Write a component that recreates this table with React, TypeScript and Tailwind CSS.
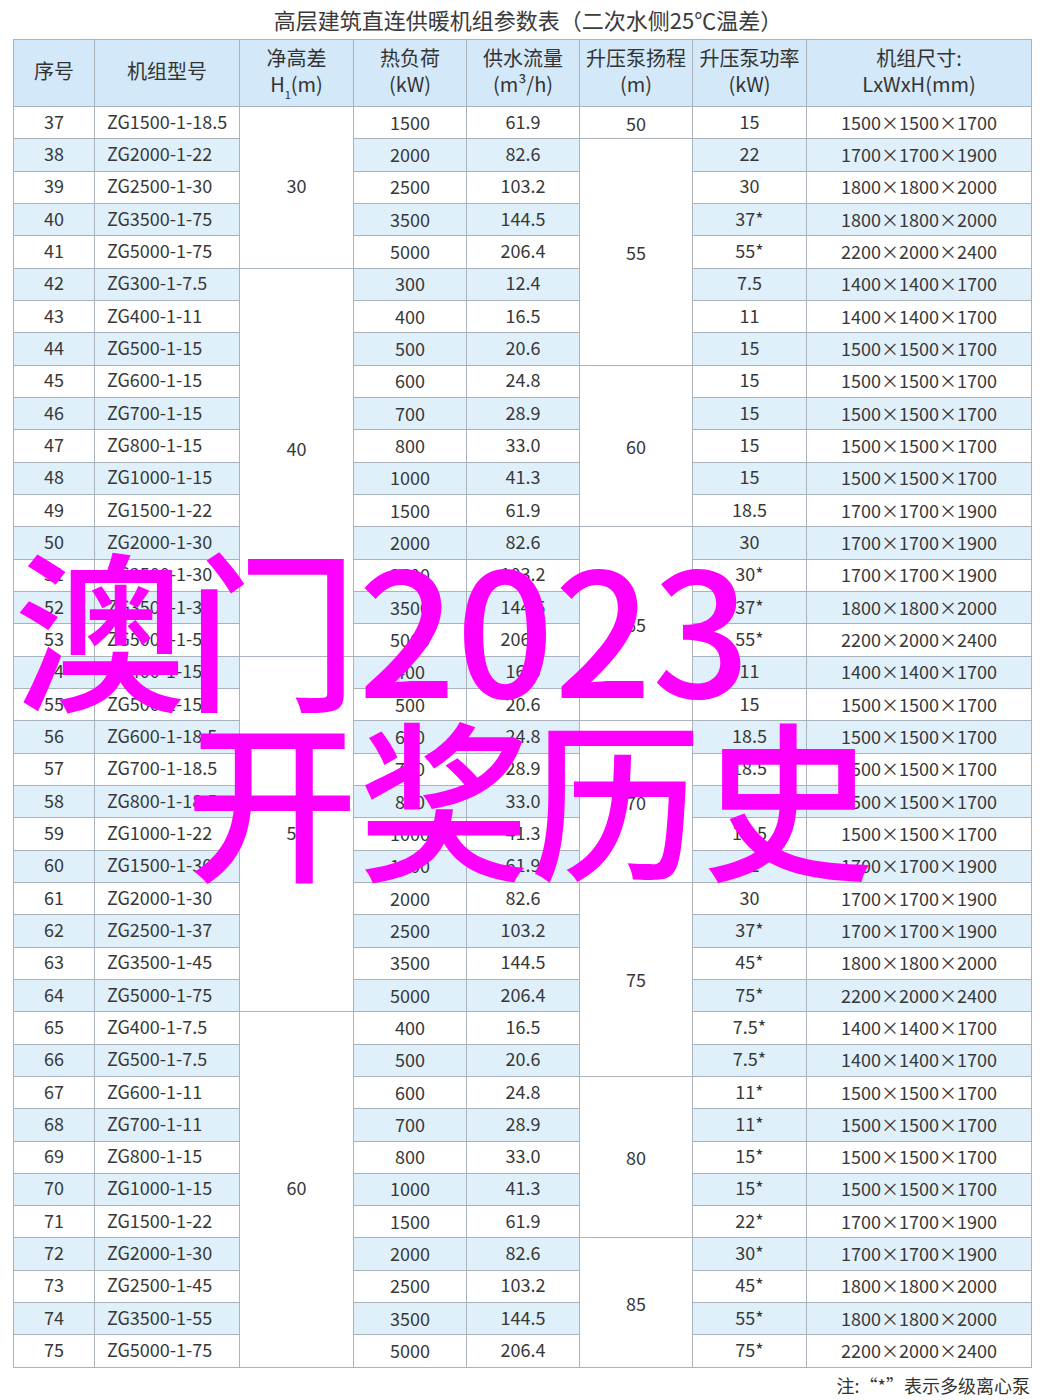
const rows: [number, string, string, string, string, string][] = [
  [37, "ZG1500-1-18.5", "1500", "61.9", "15", "1500×1500×1700"],
  [38, "ZG2000-1-22", "2000", "82.6", "22", "1700×1700×1900"],
  [39, "ZG2500-1-30", "2500", "103.2", "30", "1800×1800×2000"],
  [40, "ZG3500-1-75", "3500", "144.5", "37*", "1800×1800×2000"],
  [41, "ZG5000-1-75", "5000", "206.4", "55*", "2200×2000×2400"],
  [42, "ZG300-1-7.5", "300", "12.4", "7.5", "1400×1400×1700"],
  [43, "ZG400-1-11", "400", "16.5", "11", "1400×1400×1700"],
  [44, "ZG500-1-15", "500", "20.6", "15", "1500×1500×1700"],
  [45, "ZG600-1-15", "600", "24.8", "15", "1500×1500×1700"],
  [46, "ZG700-1-15", "700", "28.9", "15", "1500×1500×1700"],
  [47, "ZG800-1-15", "800", "33.0", "15", "1500×1500×1700"],
  [48, "ZG1000-1-15", "1000", "41.3", "15", "1500×1500×1700"],
  [49, "ZG1500-1-22", "1500", "61.9", "18.5", "1700×1700×1900"],
  [50, "ZG2000-1-30", "2000", "82.6", "30", "1700×1700×1900"],
  [51, "ZG2500-1-30", "2500", "103.2", "30*", "1700×1700×1900"],
  [52, "ZG3500-1-37", "3500", "144.5", "37*", "1800×1800×2000"],
  [53, "ZG5000-1-55", "5000", "206.4", "55*", "2200×2000×2400"],
  [54, "ZG400-1-15", "400", "16.5", "11", "1400×1400×1700"],
  [55, "ZG500-1-15", "500", "20.6", "15", "1500×1500×1700"],
  [56, "ZG600-1-18.5", "600", "24.8", "18.5", "1500×1500×1700"],
  [57, "ZG700-1-18.5", "700", "28.9", "18.5", "1500×1500×1700"],
  [58, "ZG800-1-18.5", "800", "33.0", "18.5", "1500×1500×1700"],
  [59, "ZG1000-1-22", "1000", "41.3", "18.5", "1500×1500×1700"],
  [60, "ZG1500-1-30", "1500", "61.9", "22", "1700×1700×1900"],
  [61, "ZG2000-1-30", "2000", "82.6", "30", "1700×1700×1900"],
  [62, "ZG2500-1-37", "2500", "103.2", "37*", "1700×1700×1900"],
  [63, "ZG3500-1-45", "3500", "144.5", "45*", "1800×1800×2000"],
  [64, "ZG5000-1-75", "5000", "206.4", "75*", "2200×2000×2400"],
  [65, "ZG400-1-7.5", "400", "16.5", "7.5*", "1400×1400×1700"],
  [66, "ZG500-1-7.5", "500", "20.6", "7.5*", "1400×1400×1700"],
  [67, "ZG600-1-11", "600", "24.8", "11*", "1500×1500×1700"],
  [68, "ZG700-1-11", "700", "28.9", "11*", "1500×1500×1700"],
  [69, "ZG800-1-15", "800", "33.0", "15*", "1500×1500×1700"],
  [70, "ZG1000-1-15", "1000", "41.3", "15*", "1500×1500×1700"],
  [71, "ZG1500-1-22", "1500", "61.9", "22*", "1700×1700×1900"],
  [72, "ZG2000-1-30", "2000", "82.6", "30*", "1700×1700×1900"],
  [73, "ZG2500-1-45", "2500", "103.2", "45*", "1800×1800×2000"],
  [74, "ZG3500-1-55", "3500", "144.5", "55*", "1800×1800×2000"],
  [75, "ZG5000-1-75", "5000", "206.4", "75*", "2200×2000×2400"],
];

// merged cells: first row -> [span, text]
const heightSpans: Record<number, [number, string]> = {
  37: [5, "30"],
  42: [12, "40"],
  54: [11, "50"],
  65: [11, "60"],
};
const headSpans: Record<number, [number, string]> = {
  37: [1, "50"],
  38: [7, "55"],
  45: [5, "60"],
  50: [6, "65"],
  56: [5, "70"],
  61: [6, "75"],
  67: [5, "80"],
  72: [4, "85"],
};

const cell = "border border-[#aab3bb] text-center align-middle p-0";

export default function App() {
  return (
    <div className="relative w-[1044px] h-[1400px] bg-white text-[#383838] font-['Noto_Sans_CJK_SC','Noto_Sans',sans-serif] overflow-hidden">
      <div className="h-[39px] flex items-center justify-center pb-[2px] pl-[12px] text-[22px] leading-none text-[#3a3a3a]">
        高层建筑直连供暖机组参数表（二次水侧25℃温差）
      </div>

      <table className="ml-[13px] w-[1018px] table-fixed border-collapse text-[18px] leading-none">
        <colgroup>
          <col className="w-[81px]" />
          <col className="w-[145px]" />
          <col className="w-[114px]" />
          <col className="w-[113px]" />
          <col className="w-[113px]" />
          <col className="w-[113px]" />
          <col className="w-[114px]" />
          <col className="w-[225px]" />
        </colgroup>
        <thead>
          <tr className="h-[67px] bg-[#d3e8f8] text-[20px] leading-[26px] text-[#333]">
            <th className={`${cell} pb-[4px] font-normal`}>序号</th>
            <th className={`${cell} pb-[4px] font-normal`}>机组型号</th>
            <th className={`${cell} pb-[4px] font-normal`}>
              净高差
              <br />
              H<sub className="text-[11px] align-[-4px]">1</sub>(m)
            </th>
            <th className={`${cell} pb-[4px] font-normal`}>
              热负荷
              <br />
              (kW)
            </th>
            <th className={`${cell} pb-[4px] font-normal`}>
              供水流量
              <br />
              (m³/h)
            </th>
            <th className={`${cell} pb-[4px] font-normal`}>
              升压泵扬程
              <br />
              (m)
            </th>
            <th className={`${cell} pb-[4px] font-normal`}>
              升压泵功率
              <br />
              (kW)
            </th>
            <th className={`${cell} pb-[4px] font-normal`}>
              机组尺寸:
              <br />
              LxWxH(mm)
            </th>
          </tr>
        </thead>
        <tbody>
          {rows.map(([no, model, load, flow, power, size]) => {
            const stripe = no % 2 === 0 ? "bg-[#e0f0fb]" : "bg-white";
            const h = heightSpans[no];
            const p = headSpans[no];
            return (
              <tr key={no} className="h-[32.33px]">
                <td className={`${cell} ${stripe} pb-[4px]`}>{no}</td>
                <td className={`${cell} ${stripe} pb-[4px] text-left pl-[12px]`}>{model}</td>
                {h && (
                  <td rowSpan={h[0]} className={`${cell} bg-white ${no === 42 ? "pb-[28px]" : "pb-[4px]"}`}>
                    {h[1]}
                  </td>
                )}
                <td className={`${cell} ${stripe} pb-[2px]`}>{load}</td>
                <td className={`${cell} ${stripe} pb-[4px]`}>{flow}</td>
                {p && (
                  <td rowSpan={p[0]} className={`${cell} bg-white`}>
                    {p[1]}
                  </td>
                )}
                <td className={`${cell} ${stripe} pb-[4px]`}>{power}</td>
                <td className={`${cell} ${stripe} pb-[2px]`}>{size}</td>
              </tr>
            );
          })}
        </tbody>
      </table>

      <div className="flex justify-end pr-[14px] pt-[8px] text-[18px] leading-none text-[#333]">
        注:“*”表示多级离心泵
      </div>

      <div className="absolute left-[14px] top-[537px] text-[172px] leading-none font-medium text-[#ff00ff] whitespace-nowrap">
        <div>澳门2023</div>
        <div className="pl-[172px] -mt-[2px]">开奖历史</div>
      </div>
    </div>
  );
}
